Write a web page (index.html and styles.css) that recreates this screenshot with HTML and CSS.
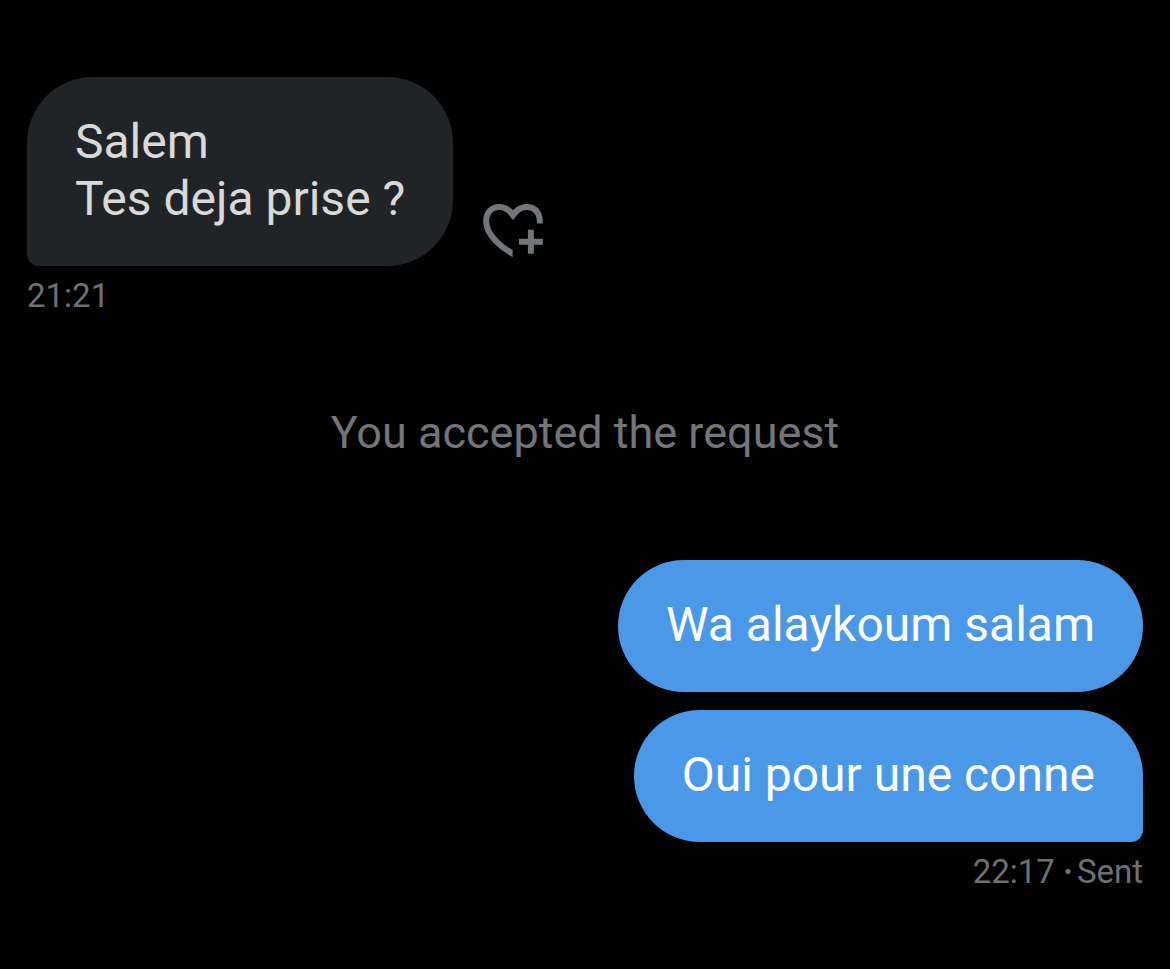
FILE: index.html
```html
<!DOCTYPE html>
<html lang="fr">
<head>
<meta charset="utf-8">
<meta name="viewport" content="width=device-width, initial-scale=1">
<title>Messages</title>
<link rel="stylesheet" href="styles.css">
</head>
<body>

<main class="chat">
  <div class="group received">
    <div class="row">
      <p class="bubble tail">Salem<br>Tes deja prise ?</p>
      <button type="button" class="react" aria-label="Add reaction">
        <svg viewBox="39 42 180 160" width="60" height="53" fill="currentColor">
          <path d="M128 202C80 175 39 136 39 93C39 62 60 42 87 42C104 42 119 49 129 61C139 49 154 42 171 42C199 42 219 62 219 93V101H201V93C201 73 189 60 171 60C155 60 145 68 129 91C113 68 103 60 87 60C69 60 57 73 57 93C57 125 88 157 128 181Z"/>
          <path d="M174 120h18v27h27v18h-27v27h-18v-27h-27v-18h27z"/>
        </svg>
      </button>
    </div>
    <div class="meta"><time>21:21</time></div>
  </div>

  <p class="notice">You accepted the request</p>

  <div class="group sent">
    <p class="bubble">Wa alaykoum salam</p>
    <p class="bubble tail">Oui pour une conne</p>
    <div class="meta"><time>22:17</time> <b>·</b><span>Sent</span></div>
  </div>
</main>

</body>
</html>
```

FILE: styles.css
```css
body {
  margin: 0;
  background-color: #000;
  font-family: Roboto, "Liberation Sans", sans-serif;
}

p {
  margin: 0;
}

.chat {
  padding: 77px 27px 48px;
}

.group {
  display: flex;
  flex-direction: column;
  align-items: flex-start;
}

.row {
  display: flex;
  align-items: flex-end;
  gap: 30px;
}

.bubble {
  padding: 36px 48px 39px;
  border-radius: 66px;
  font-size: 48px;
  line-height: 57px;
}

.received .bubble {
  background-color: #212427;
  color: #d9d9d9;
}

.received .tail {
  border-bottom-left-radius: 12px;
}

.sent {
  align-items: flex-end;
}

.sent .bubble {
  background-color: #4a99e9;
  color: #fff;
}

.sent .bubble + .bubble {
  margin-top: 18px;
}

.sent .tail {
  border-bottom-right-radius: 12px;
}

.react {
  padding: 0;
  margin-bottom: 9px;
  border: none;
  background: none;
  color: #72767a;
  cursor: pointer;
}

.react svg {
  display: block;
}

.meta {
  display: flex;
  gap: 4px;
  margin-top: 10px;
  color: #6e7072;
  font-size: 33px;
  line-height: 40px;
}

.meta b {
  margin-left: 4px;
}

.notice {
  margin: 90px 0 100px;
  color: #737578;
  font-size: 45px;
  line-height: 54px;
  text-align: center;
}
```
